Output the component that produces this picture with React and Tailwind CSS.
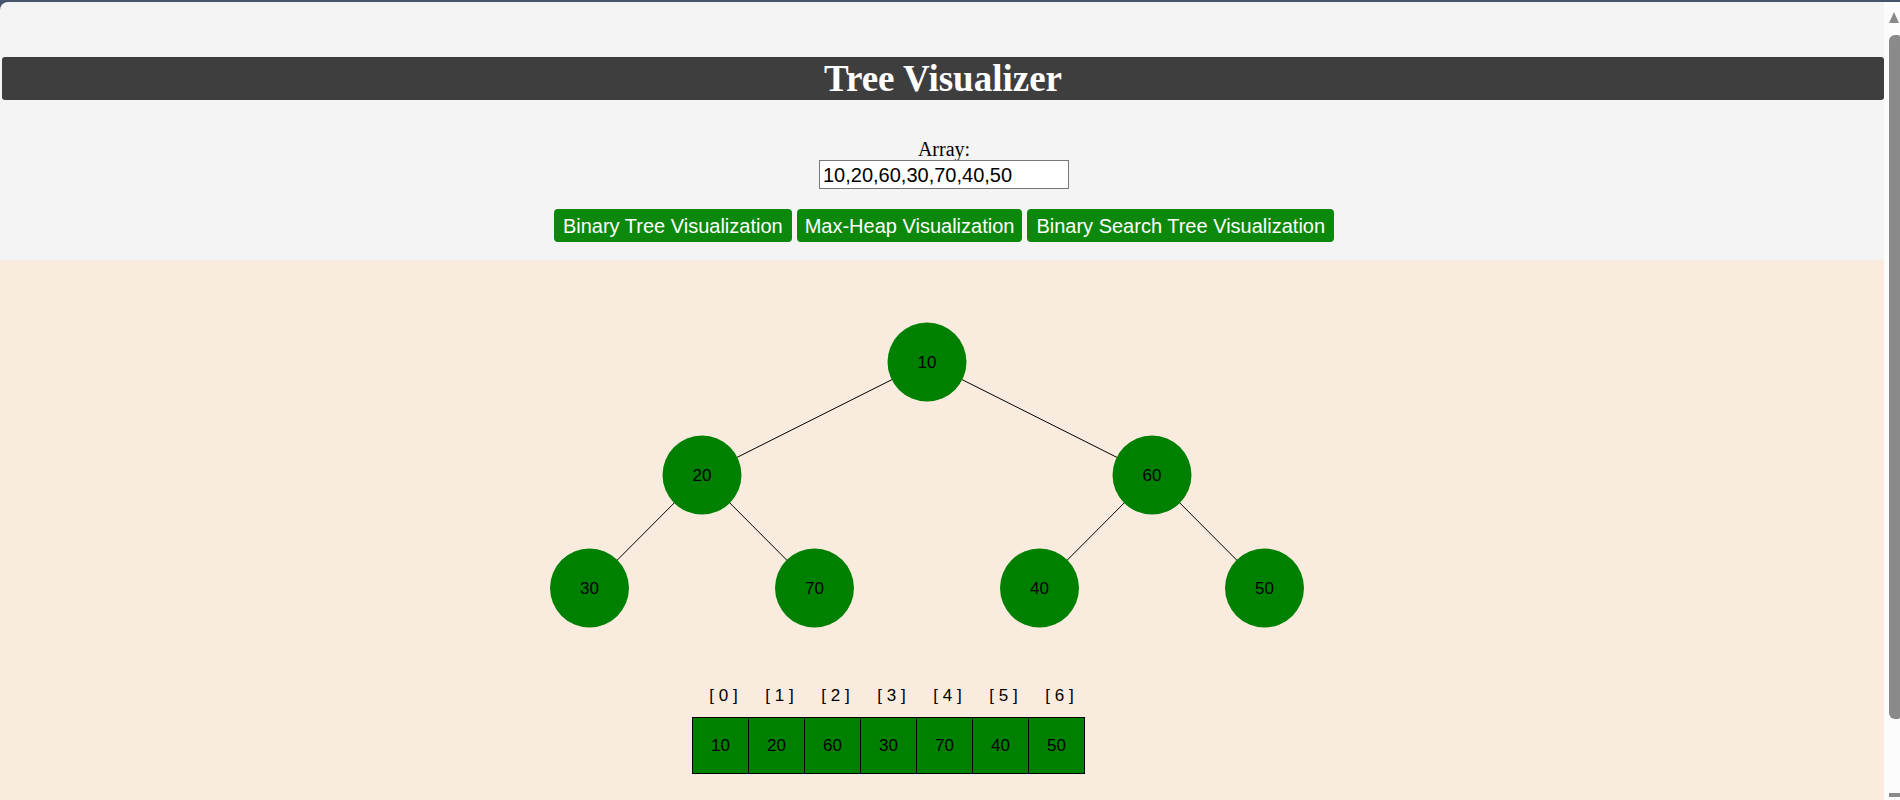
import React, { useState } from 'react'

const arial = { fontFamily: '"Liberation Sans", Arial, sans-serif' }

const nodes = [
  { v: 10, x: 927, y: 102 },
  { v: 20, x: 702, y: 215 },
  { v: 60, x: 1152, y: 215 },
  { v: 30, x: 589.5, y: 328 },
  { v: 70, x: 814.5, y: 328 },
  { v: 40, x: 1039.5, y: 328 },
  { v: 50, x: 1264.5, y: 328 },
]

const edges = [[0,1],[0,2],[1,3],[1,4],[2,5],[2,6]]

function Tree(){
  return (
    <svg width="1884" height="426" className="block">
      {edges.map(([a,b])=>(
        <line key={a+'-'+b} x1={nodes[a].x} y1={nodes[a].y} x2={nodes[b].x} y2={nodes[b].y} stroke="#000" strokeWidth="1" />
      ))}
      {nodes.map(n=>(
        <g key={n.v}>
          <circle cx={n.x} cy={n.y} r="39.5" fill="#008000" />
          <text x={n.x} y={n.y + 6} textAnchor="middle" fontSize="17" fill="#000" style={arial}>{n.v}</text>
        </g>
      ))}
    </svg>
  )
}

function Scrollbar(){
  return (
    <div className="w-[16px] shrink-0 bg-[#fcfcfc] flex flex-col items-end">
      <div className="h-[10px]" />
      <div className="w-0 h-0 mr-[1px] border-l-[5px] border-r-[5px] border-b-[11px] border-l-transparent border-r-transparent border-b-[#8a8a8a]" />
      <div className="h-[12px]" />
      <div className="w-[11px] h-[684px] bg-[#8a8a8a] rounded-l-[6px] rounded-r-[2px]" />
      <div className="h-[74px]" />
      <div className="w-[11px] h-[4px] bg-[#8a8a8a]" />
    </div>
  )
}

export default function App(){
  const [arr, setArr] = useState('10,20,60,30,70,40,50')
  const values = [10,20,60,30,70,40,50]

  return (
    <div className="w-[1900px] h-[800px] overflow-hidden bg-[#44546a] pt-[2px]">
      <div className="flex h-[798px] rounded-tl-[8px] overflow-hidden">
        <div className="flex-1 flex flex-col bg-[#f4f4f4]">
          <div className="pt-[55px]">
            <h1 className="ml-[2px] h-[43px] rounded-[3px] bg-[#3e3e3e] text-white text-center font-bold text-[37px] leading-[43px]" style={{ fontFamily: '"Liberation Serif", "Times New Roman", serif' }}>
              Tree Visualizer
            </h1>
          </div>

          <div className="pl-[4px] flex flex-col items-center pt-[38px]">
            <label className="text-[20px] leading-[22px] text-black" style={{ fontFamily: '"Liberation Serif", "Times New Roman", serif' }}>Array:</label>
            <input
              value={arr}
              onChange={e=>setArr(e.target.value)}
              className="w-[250px] h-[29px] border border-[#767676] bg-white px-[3px] text-[20px] text-black outline-none"
              style={arial}
            />
            <div className="flex gap-[5px] mt-[20px] mb-[18px]" style={arial}>
              <button className="h-[33px] px-[9px] rounded-[4px] bg-[#0c880c] text-white text-[20px]">Binary Tree Visualization</button>
              <button className="h-[33px] px-[8px] rounded-[4px] bg-[#0c880c] text-white text-[20px]">Max-Heap Visualization</button>
              <button className="h-[33px] px-[9px] rounded-[4px] bg-[#0c880c] text-white text-[20px]">Binary Search Tree Visualization</button>
            </div>
          </div>

          <div className="flex-1 bg-[#f9ecde]">
            <Tree />
            <div className="ml-[692px]" style={arial}>
              <div className="flex h-[19px]">
                {values.map((v,i)=>(
                  <div key={i} className="w-[56px] pl-[7px] text-center text-[17px] leading-[19px] text-black">[ {i} ]</div>
                ))}
              </div>
              <div className="flex mt-[12px] border-l border-t border-black w-fit">
                {values.map((v,i)=>(
                  <div key={i} className="w-[56px] h-[56px] border-r border-b border-black bg-[#008000] flex items-center justify-center text-[17px] text-black">{v}</div>
                ))}
              </div>
            </div>
          </div>
        </div>
        <Scrollbar />
      </div>
    </div>
  )
}
